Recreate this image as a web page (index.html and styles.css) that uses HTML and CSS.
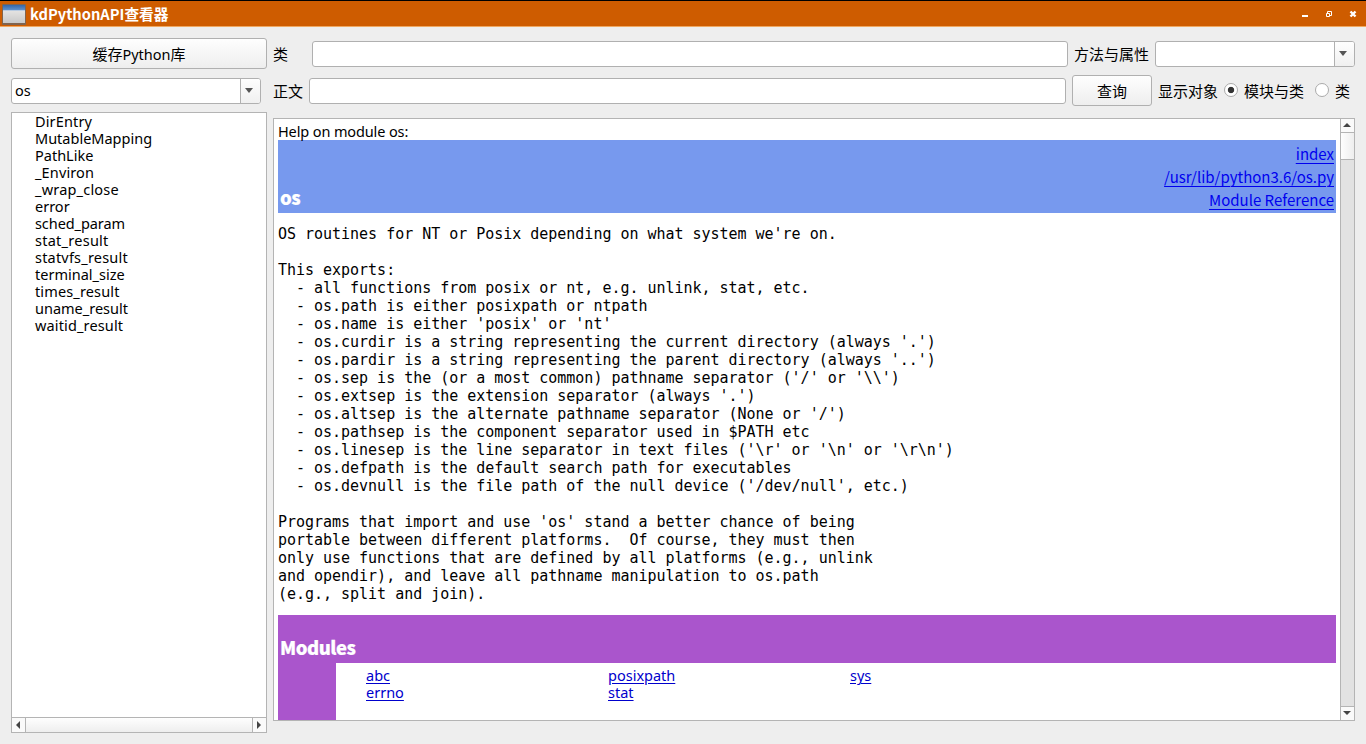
FILE: index.html
```html
<!DOCTYPE html>
<html lang="zh-CN">
<head>
<meta charset="utf-8">
<title>kdPythonAPI查看器</title>
<link rel="stylesheet" href="styles.css">
</head>
<body>
<header class="titlebar">
  <svg class="app-icon" width="24" height="22" viewBox="0 0 24 22">
    <defs>
      <linearGradient id="bar" x1="0" y1="0" x2="0" y2="1"><stop offset="0" stop-color="#3567a8"/><stop offset="1" stop-color="#5f91cd"/></linearGradient>
      <linearGradient id="pane" x1="0" y1="0" x2="0" y2="1"><stop offset="0" stop-color="#f1efed"/><stop offset="1" stop-color="#c9c9c9"/></linearGradient>
    </defs>
    <rect x="0" y="1" width="24" height="21" rx="1" fill="#80644f"/>
    <rect x="1" y="2" width="22" height="18" fill="url(#pane)"/>
    <rect x="1" y="2" width="22" height="5" fill="url(#bar)"/>
    <path d="M1 7.5H23" stroke="#b9cce2"/>
  </svg>
  <h1 class="window-title">kdPythonAPI查看器</h1>
  <div class="window-buttons">
    <svg width="8" height="8" viewBox="0 0 8 8"><path d="M1 6H7" stroke="#fff" stroke-width="2"/></svg>
    <svg width="8" height="8" viewBox="0 0 8 8" fill="none" stroke="#fff"><path d="M2.5 3V1.5H6.5V5.5H5"/><path d="M1.5 3.5H4.5V6.5H1.5Z"/></svg>
    <svg width="8" height="8" viewBox="0 0 8 8"><path d="M1.5 1.5L6.5 6.5M6.5 1.5L1.5 6.5" stroke="#fff" stroke-width="2.4"/></svg>
  </div>
</header>
<main class="workspace">
  <aside class="sidebar">
    <button class="button cache">缓存<span class="ui">Python</span>库</button>
    <div class="combo module"><span class="combo-value ui">os</span><span class="combo-arrow"><svg width="8" height="5"><path d="M0 0H8L4 5Z" fill="#555"/></svg></span></div>
    <section class="list">
      <ul class="items ui">
        <li class="wide">DirEntry</li>
        <li>MutableMapping</li>
        <li>PathLike</li>
        <li class="wide">_Environ</li>
        <li class="wider">_wrap_close</li>
        <li>error</li>
        <li class="tight">sched_param</li>
        <li class="widest">stat_result</li>
        <li class="wider">statvfs_result</li>
        <li>terminal_size</li>
        <li class="wide">times_result</li>
        <li>uname_result</li>
        <li class="wide">waitid_result</li>
      </ul>
      <div class="hscroll">
        <span class="step left"><svg width="4" height="8"><path d="M4 0V8L0 4Z" fill="#444"/></svg></span>
        <span class="hthumb"></span>
        <span class="step right"><svg width="4" height="8"><path d="M0 0V8L4 4Z" fill="#444"/></svg></span>
      </div>
    </section>
  </aside>
  <section class="content">
    <div class="row">
      <label class="label class-label">类</label>
      <span class="field"></span>
      <label class="label member-label">方法与属性</label>
      <div class="combo member"><span class="combo-value"></span><span class="combo-arrow"><svg width="8" height="5"><path d="M0 0H8L4 5Z" fill="#555"/></svg></span></div>
    </div>
    <div class="row second">
      <label class="label body-label">正文</label>
      <span class="field"></span>
      <button class="button query">查询</button>
      <label class="label show-label">显示对象</label>
      <span class="radio checked"></span>
      <label class="label module-label">模块与类</label>
      <span class="radio"></span>
      <label class="label">类</label>
    </div>
    <div class="browser">
      <div class="page">
        <p class="intro ui">Help on module os:</p>
        <div class="module-head">
          <h2 class="heading">os</h2>
          <div class="head-links"><a>index</a><a>/usr/lib/python3.6/os.py</a><a>Module Reference</a></div>
        </div>
        <pre class="doc">OS routines for NT or Posix depending on what system we're on.

This exports:
  - all functions from posix or nt, e.g. unlink, stat, etc.
  - os.path is either posixpath or ntpath
  - os.name is either 'posix' or 'nt'
  - os.curdir is a string representing the current directory (always '.')
  - os.pardir is a string representing the parent directory (always '..')
  - os.sep is the (or a most common) pathname separator ('/' or '\\')
  - os.extsep is the extension separator (always '.')
  - os.altsep is the alternate pathname separator (None or '/')
  - os.pathsep is the component separator used in $PATH etc
  - os.linesep is the line separator in text files ('\r' or '\n' or '\r\n')
  - os.defpath is the default search path for executables
  - os.devnull is the file path of the null device ('/dev/null', etc.)

Programs that import and use 'os' stand a better chance of being
portable between different platforms.  Of course, they must then
only use functions that are defined by all platforms (e.g., unlink
and opendir), and leave all pathname manipulation to os.path
(e.g., split and join).</pre>
        <div class="modules-head"><h2 class="heading">Modules</h2></div>
        <div class="modules-body">
          <div class="modules-strip"></div>
          <div class="modules-grid ui">
            <a>abc</a><a>posixpath</a><a>sys</a>
            <a>errno</a><a>stat</a>
          </div>
        </div>
      </div>
      <div class="vscroll">
        <span class="step up"><svg width="8" height="4"><path d="M0 4H8L4 0Z" fill="#444"/></svg></span>
        <span class="vthumb"></span>
        <span class="groove"></span>
        <span class="step down"><svg width="8" height="4"><path d="M0 0H8L4 4Z" fill="#444"/></svg></span>
      </div>
    </div>
  </section>
</main>
</body>
</html>
```
FILE: styles.css
```css
* { box-sizing: border-box; }
html, body { margin: 0; height: 744px; overflow: hidden; }
body { display: flex; flex-direction: column; background: #eee; color: #000; font: 15px/22px "Noto Sans CJK SC", sans-serif; }
svg { display: block; flex: none; }
.ui { font-family: "Noto Sans", sans-serif; font-size: 14.5px; }

.titlebar { display: flex; align-items: flex-start; height: 27px; flex: none; padding: 1px 9px 0 2px; background: #ce5c00; border-top: 1px solid #000; border-bottom: 1px solid #f0a860; }
.app-icon { margin-top: 1px; }
.window-title { margin: 1px 0 0 4px; color: #fff; font-size: 14.7px; font-weight: 700; line-height: 22px; white-space: nowrap; }
.window-buttons { display: flex; gap: 16px; margin: 8px 0 0 auto; }

.workspace { display: flex; flex: 1; gap: 6px; padding: 11px; min-height: 0; }
.sidebar { display: flex; flex-direction: column; width: 256px; flex: none; }
.button { display: flex; align-items: center; justify-content: center; height: 31px; padding: 1px 0 0; border: 1px solid #b0b0b0; border-radius: 3px; background: linear-gradient(#fefefe, #eee); color: #000; font: 15px/22px "Noto Sans CJK SC", sans-serif; flex: none; }
.combo { display: flex; height: 26px; border: 1px solid #b0b0b0; border-radius: 3px; background: #fff; overflow: hidden; flex: none; }
.combo-value { flex: 1; padding-left: 3px; line-height: 23px; }
.combo-arrow { display: flex; align-items: center; justify-content: center; width: 20px; padding: 0 3px 1px 0; border-left: 1px solid #b0b0b0; background: linear-gradient(#fefefe, #f0f0f0); }
.module { width: 250px; margin-top: 9px; }

.list { display: flex; flex-direction: column; flex: 1; margin-top: 8px; border: 1px solid #b4b4b4; background: #fff; }
.items { flex: 1; margin: 0; padding: 0 0 0 23px; list-style: none; line-height: 17px; }
.tight { letter-spacing: -.08px; }
.wide { letter-spacing: .14px; }
.wider { letter-spacing: .2px; }
.widest { letter-spacing: .26px; }
.hscroll { display: flex; height: 15px; border-top: 1px solid #b4b4b4; background: #fafafa; }
.step { display: flex; align-items: center; justify-content: center; flex: none; background: #fafafa; }
.left, .right { width: 14px; padding-right: 1px; }
.left { border-right: 1px solid #b4b4b4; }
.right { border-left: 1px solid #b4b4b4; }
.hthumb { flex: 1; background: linear-gradient(#fefefe, #eee); }

.content { display: flex; flex-direction: column; flex: 1; min-width: 0; }
.row { display: flex; align-items: center; height: 31px; flex: none; }
.second { margin-top: 6px; padding-right: 5px; }
.label { flex: none; white-space: nowrap; }
.field { flex: 1; height: 26px; border: 1px solid #b0b0b0; border-radius: 3px; background: #fff; }
.class-label { width: 39px; }
.member-label { margin-left: 6px; width: 81px; }
.member { width: 200px; }
.body-label { width: 36px; }
.query { width: 80px; margin: 0 6px; }
.show-label { width: 66px; }
.radio { width: 14px; height: 14px; margin-top: -2px; border: 1px solid #aaa; border-radius: 50%; background: #fff; flex: none; }
.checked { background: radial-gradient(circle, #333 0 2.8px, #fff 3.6px); }
.module-label { margin-left: 6px; width: 71px; }
.module-label + .radio { margin-right: 6px; }

.browser { display: flex; height: 603px; margin-top: 12px; border: 1px solid #b4b4b4; background: #fff; overflow: hidden; }
.page { flex: 1; padding: 4px 4px 0; }
.intro { margin: 0; height: 17px; line-height: 17px; letter-spacing: -.12px; }
.module-head { display: flex; justify-content: space-between; align-items: flex-end; height: 73px; padding: 2px; background: #7799ee; }
.heading { margin: 0 0 1px; color: #fff; font-size: 18.5px; line-height: 26px; font-weight: 900; letter-spacing: -.5px; -webkit-text-stroke: .2px #fff; }
.head-links { display: flex; flex-direction: column; align-items: flex-end; font-size: 15px; line-height: 23px; }
a { color: #0000ee; text-decoration: underline; text-underline-offset: 3px; text-decoration-thickness: 1px; }
.doc { margin: 12px 0; font: 15px/18px "DejaVu Sans Mono", monospace; letter-spacing: -.02px; }
.modules-head { display: flex; align-items: flex-end; height: 48px; padding: 2px; background: #aa55cc; }
.modules-body { display: flex; height: 60px; }
.modules-strip { width: 58px; background: #aa55cc; }
.modules-grid { display: grid; grid-template-columns: 242px 242px 242px; grid-auto-rows: 17px; padding: 4px 0 0 30px; line-height: 17px; align-content: start; }
.modules-grid a { color: #0000cc; justify-self: start; text-underline-offset: 2px; }

.vscroll { display: flex; flex-direction: column; width: 14px; border-left: 1px solid #b4b4b4; flex: none; }
.up, .down { height: 14px; padding: 0 1px 1px 0; }
.up { border-bottom: 1px solid #b4b4b4; }
.down { border-top: 1px solid #b4b4b4; }
.vthumb { height: 27px; border-bottom: 1px solid #b4b4b4; background: linear-gradient(90deg, #fefefe, #eee); }
.groove { flex: 1; background: #e2e2e2; }
```
